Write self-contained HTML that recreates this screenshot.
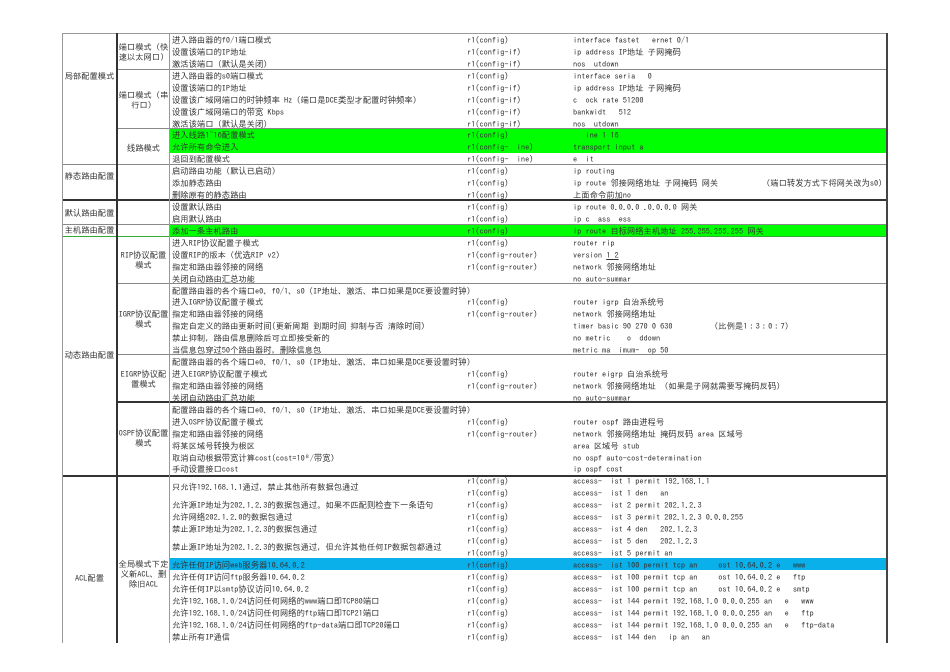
<!DOCTYPE html>
<html><head><meta charset="utf-8">
<style>
html,body{margin:0;padding:0;background:#fff;}
body{width:950px;height:672px;position:relative;overflow:hidden;font-family:"IPAGothic","Noto Sans CJK SC",monospace;font-size:8.3px;color:#333;}
.r{position:absolute;left:0;width:950px;height:12px;line-height:12px;white-space:pre;top:calc(34px + 11.93px * var(--i));}
.r span{position:absolute;top:0;}
.a{left:172px}.b{left:467px}.c{left:573px}
.g{position:absolute;left:170px;width:717px;background:#00ff00;}
.bl{position:absolute;left:170px;width:717px;background:#0ab0ea;}
.h{position:absolute;height:1px;background:#888;}
.hd{position:absolute;height:2px;background:#333;}
.v{position:absolute;width:1px;background:#999;}
.l1{position:absolute;left:62px;width:55px;text-align:center;white-space:pre;line-height:10px;}
.l2{position:absolute;left:117px;width:53px;text-align:center;white-space:pre;line-height:10px;}
</style></head><body>
<div class="g" style="top:129px;height:24px"></div>
<div class="g" style="top:224.5px;height:12px"></div>
<div class="bl" style="top:558px;height:12px"></div>

<div class="h" style="top:33px;left:62px;width:825px;background:#999"></div>
<div class="h" style="top:69px;left:117px;width:770px"></div>
<div class="h" style="top:128px;left:117px;width:770px"></div>
<div class="h" style="top:164px;left:62px;width:825px"></div>
<div class="hd" style="top:199px;left:62px;width:825px"></div>
<div class="h" style="top:224px;left:62px;width:825px"></div>
<div class="h" style="top:236px;left:62px;width:825px;background:#3a3"></div>
<div class="h" style="top:283px;left:117px;width:770px"></div>
<div class="h" style="top:354px;left:117px;width:770px"></div>
<div class="hd" style="top:401px;left:117px;width:770px"></div>
<div class="hd" style="top:475px;left:62px;width:825px"></div>

<div class="v" style="left:62px;top:33px;height:610px"></div>
<div class="v" style="left:116px;top:33px;height:610px;width:2px;background:#333"></div>
<div class="v" style="left:169px;top:33px;height:610px"></div>
<div class="v" style="left:886px;top:33px;height:610px;width:2px;background:#444"></div>

<div class="l1" style="top:71px">局部配置模式</div>
<div class="l1" style="top:171px">静态路由配置</div>
<div class="l1" style="top:208px">默认路由配置</div>
<div class="l1" style="top:225px">主机路由配置</div>
<div class="l1" style="top:350px">动态路由配置</div>
<div class="l1" style="top:573px">ACL配置</div>

<div class="l2" style="top:42px">端口模式（快
速以太网口）</div>
<div class="l2" style="top:90px">端口模式（串
行口）</div>
<div class="l2" style="top:143px">线路模式</div>
<div class="l2" style="top:250px">RIP协议配置
模式</div>
<div class="l2" style="top:309px">IGRP协议配置
模式</div>
<div class="l2" style="top:369px">EIGRP协议配
置模式</div>
<div class="l2" style="top:428px">OSPF协议配置
模式</div>
<div class="l2" style="top:559px">全局模式下定
义新ACL、删
除旧ACL</div>

<div class="r" style="--i:0"><span class="a">进入路由器的f0/1端口模式</span><span class="b">r1(config)</span><span class="c">interface fastet   ernet 0/1</span></div>
<div class="r" style="--i:1"><span class="a">设置该端口的IP地址</span><span class="b">r1(config-if)</span><span class="c">ip address IP地址 子网掩码</span></div>
<div class="r" style="--i:2"><span class="a">激活该端口（默认是关闭）</span><span class="b">r1(config-if)</span><span class="c">nos  utdown</span></div>
<div class="r" style="--i:3"><span class="a">进入路由器的s0端口模式</span><span class="b">r1(config)</span><span class="c">interface seria   0</span></div>
<div class="r" style="--i:4"><span class="a">设置该端口的IP地址</span><span class="b">r1(config-if)</span><span class="c">ip address IP地址 子网掩码</span></div>
<div class="r" style="--i:5"><span class="a">设置该广域网端口的时钟频率 Hz（端口是DCE类型才配置时钟频率）</span><span class="b">r1(config-if)</span><span class="c">c  ock rate 51200</span></div>
<div class="r" style="--i:6"><span class="a">设置该广域网端口的带宽 Kbps</span><span class="b">r1(config-if)</span><span class="c">bankwidt   512</span></div>
<div class="r" style="--i:7"><span class="a">激活该端口（默认是关闭）</span><span class="b">r1(config-if)</span><span class="c">nos  utdown</span></div>
<div class="r" style="--i:8"><span class="a">进入线路1~16配置模式</span><span class="b">r1(config)</span><span class="c">   ine 1 16</span></div>
<div class="r" style="--i:9"><span class="a">允许所有命令进入</span><span class="b">r1(config-  ine)</span><span class="c">transport input a</span></div>
<div class="r" style="--i:10"><span class="a">退回到配置模式</span><span class="b">r1(config-  ine)</span><span class="c">e  it</span></div>
<div class="r" style="--i:11"><span class="a">启动路由功能（默认已启动）</span><span class="b">r1(config)</span><span class="c">ip routing</span></div>
<div class="r" style="--i:12"><span class="a">添加静态路由</span><span class="b">r1(config)</span><span class="c">ip route 邻接网络地址 子网掩码 网关</span><span style="left:762px">（端口转发方式下将网关改为s0）</span></div>
<div class="r" style="--i:13"><span class="a">删除原有的静态路由</span><span class="b">r1(config)</span><span class="c">上面命令前加no</span></div>
<div class="r" style="--i:14"><span class="a">设置默认路由</span><span class="b">r1(config)</span><span class="c">ip route 0.0.0.0 .0.0.0.0 网关</span></div>
<div class="r" style="--i:15"><span class="a">启用默认路由</span><span class="b">r1(config)</span><span class="c">ip c  ass  ess</span></div>
<div class="r" style="--i:16"><span class="a">添加一条主机路由</span><span class="b">r1(config)</span><span class="c">ip route 目标网络主机地址 255.255.255.255 网关</span></div>
<div class="r" style="--i:17"><span class="a">进入RIP协议配置子模式</span><span class="b">r1(config)</span><span class="c">router rip</span></div>
<div class="r" style="--i:18"><span class="a">设置RIP的版本（优选RIP v2）</span><span class="b">r1(config-router)</span><span class="c">version <u>1 2</u></span></div>
<div class="r" style="--i:19"><span class="a">指定和路由器邻接的网络</span><span class="b">r1(config-router)</span><span class="c">network 邻接网络地址</span></div>
<div class="r" style="--i:20"><span class="a">关闭自动路由汇总功能</span><span class="c">no auto-summar</span></div>
<div class="r" style="--i:21"><span class="a">配置路由器的各个端口e0、f0/1、s0（IP地址、激活、串口如果是DCE要设置时钟）</span></div>
<div class="r" style="--i:22"><span class="a">进入IGRP协议配置子模式</span><span class="b">r1(config)</span><span class="c">router igrp 自治系统号</span></div>
<div class="r" style="--i:23"><span class="a">指定和路由器邻接的网络</span><span class="b">r1(config-router)</span><span class="c">network 邻接网络地址</span></div>
<div class="r" style="--i:24"><span class="a">指定自定义的路由更新时间(更新周期 到期时间 抑制与否 清除时间)</span><span class="c">timer basic 90 270 0 630</span><span style="left:710px">（比例是1：3：0：7）</span></div>
<div class="r" style="--i:25"><span class="a">禁止抑制，路由信息删除后可立即接受新的</span><span class="c">no metric    o  ddown</span></div>
<div class="r" style="--i:26"><span class="a">当信息包穿过50个路由器时，删除信息包</span><span class="c">metric ma  imum-  op 50</span></div>
<div class="r" style="--i:27"><span class="a">配置路由器的各个端口e0、f0/1、s0（IP地址、激活、串口如果是DCE要设置时钟）</span></div>
<div class="r" style="--i:28"><span class="a">进入EIGRP协议配置子模式</span><span class="b">r1(config)</span><span class="c">router eigrp 自治系统号</span></div>
<div class="r" style="--i:29"><span class="a">指定和路由器邻接的网络</span><span class="b">r1(config-router)</span><span class="c">network 邻接网络地址 （如果是子网就需要写掩码反码）</span></div>
<div class="r" style="--i:30"><span class="a">关闭自动路由汇总功能</span><span class="c">no auto-summar</span></div>
<div class="r" style="--i:31"><span class="a">配置路由器的各个端口e0、f0/1、s0（IP地址、激活、串口如果是DCE要设置时钟）</span></div>
<div class="r" style="--i:32"><span class="a">进入OSPF协议配置子模式</span><span class="b">r1(config)</span><span class="c">router ospf 路由进程号</span></div>
<div class="r" style="--i:33"><span class="a">指定和路由器邻接的网络</span><span class="b">r1(config-router)</span><span class="c">network 邻接网络地址 掩码反码 area 区域号</span></div>
<div class="r" style="--i:34"><span class="a">将某区域号转换为根区</span><span class="c">area 区域号 stub</span></div>
<div class="r" style="--i:35"><span class="a">取消自动根据带宽计算cost(cost=10⁸/带宽)</span><span class="c">no ospf auto-cost-determination</span></div>
<div class="r" style="--i:36"><span class="a">手动设置接口cost</span><span class="c">ip ospf cost</span></div>

<div class="r" style="--i:37.5"><span class="a">只允许192.168.1.1通过，禁止其他所有数据包通过</span></div>
<div class="r" style="--i:37"><span class="b">r1(config)</span><span class="c">access-  ist 1 permit 192.168.1.1</span></div>
<div class="r" style="--i:38"><span class="b">r1(config)</span><span class="c">access-  ist 1 den   an</span></div>
<div class="r" style="--i:39"><span class="a">允许源IP地址为202.1.2.3的数据包通过。如果不匹配则检查下一条语句</span><span class="b">r1(config)</span><span class="c">access-  ist 2 permit 202.1.2.3</span></div>
<div class="r" style="--i:40"><span class="a">允许网络202.1.2.0的数据包通过</span><span class="b">r1(config)</span><span class="c">access-  ist 3 permit 202.1.2.3 0.0.0.255</span></div>
<div class="r" style="--i:41"><span class="a">禁止源IP地址为202.1.2.3的数据包通过</span><span class="b">r1(config)</span><span class="c">access-  ist 4 den   202.1.2.3</span></div>
<div class="r" style="--i:42.5"><span class="a">禁止源IP地址为202.1.2.3的数据包通过，但允许其他任何IP数据包都通过</span></div>
<div class="r" style="--i:42"><span class="b">r1(config)</span><span class="c">access-  ist 5 den   202.1.2.3</span></div>
<div class="r" style="--i:43"><span class="b">r1(config)</span><span class="c">access-  ist 5 permit an</span></div>
<div class="r" style="--i:44"><span class="a">允许任何IP访问web服务器10.64.0.2</span><span class="b">r1(config)</span><span class="c">access-  ist 100 permit tcp an     ost 10.64.0.2 e   www</span></div>
<div class="r" style="--i:45"><span class="a">允许任何IP访问ftp服务器10.64.0.2</span><span class="b">r1(config)</span><span class="c">access-  ist 100 permit tcp an     ost 10.64.0.2 e   ftp</span></div>
<div class="r" style="--i:46"><span class="a">允许任何IP以smtp协议访问10.64.0.2</span><span class="b">r1(config)</span><span class="c">access-  ist 100 permit tcp an     ost 10.64.0.2 e   smtp</span></div>
<div class="r" style="--i:47"><span class="a">允许192.168.1.0/24访问任何网络的www端口即TCP80端口</span><span class="b">r1(config)</span><span class="c">access-  ist 144 permit 192.168.1.0 0.0.0.255 an   e   www</span></div>
<div class="r" style="--i:48"><span class="a">允许192.168.1.0/24访问任何网络的ftp端口即TCP21端口</span><span class="b">r1(config)</span><span class="c">access-  ist 144 permit 192.168.1.0 0.0.0.255 an   e   ftp</span></div>
<div class="r" style="--i:49"><span class="a">允许192.168.1.0/24访问任何网络的ftp-data端口即TCP20端口</span><span class="b">r1(config)</span><span class="c">access-  ist 144 permit 192.168.1.0 0.0.0.255 an   e   ftp-data</span></div>
<div class="r" style="--i:50"><span class="a">禁止所有IP通信</span><span class="b">r1(config)</span><span class="c">access-  ist 144 den   ip an   an</span></div>
</body></html>
